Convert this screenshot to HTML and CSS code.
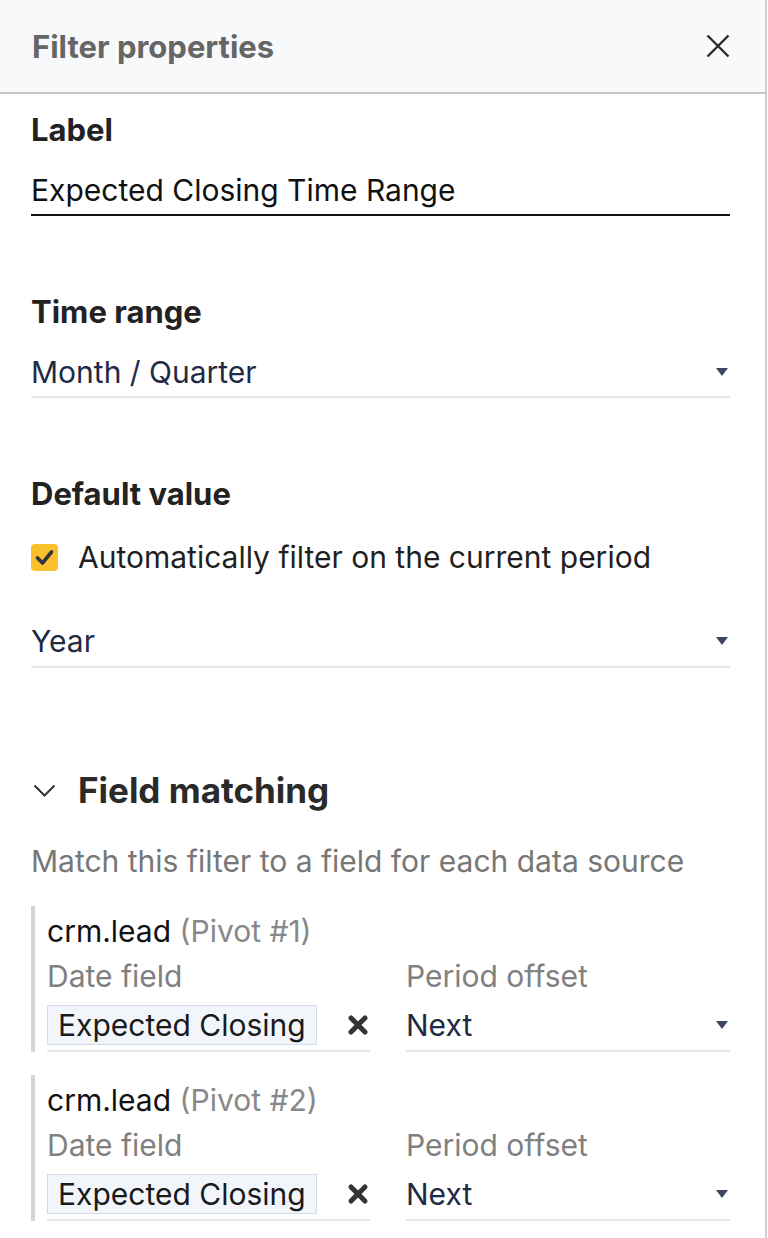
FILE: index.html
```html
<!DOCTYPE html>
<html>
<head>
<meta charset="utf-8">
<link rel="stylesheet" href="styles.css">
</head>
<body>
<div class="panel">
  <div class="header">
    <div class="title">Filter properties</div>
    <svg class="close" width="24" height="24" viewBox="0 0 24 24"><path d="M1.5 1.5 L22.5 22.5 M22.5 1.5 L1.5 22.5" stroke="#2b2b2b" stroke-width="2.4" fill="none"/></svg>
  </div>
  <div class="content">
    <div class="section s-label">
      <div class="heading">Label</div>
      <div class="input">Expected Closing Time Range</div>
    </div>
    <div class="section s-range">
      <div class="heading">Time range</div>
      <div class="select"><span>Month / Quarter</span><i class="caret"></i></div>
    </div>
    <div class="section s-default">
      <div class="heading">Default value</div>
      <div class="check-row">
        <span class="checkbox"><svg width="27" height="27" viewBox="0 0 27 27"><path d="M6.5 14 L11.5 19 L20.5 8" stroke="#2f3440" stroke-width="3.6" fill="none" stroke-linecap="round" stroke-linejoin="round"/></svg></span>
        <span>Automatically filter on the current period</span>
      </div>
      <div class="select year"><span>Year</span><i class="caret"></i></div>
    </div>
    <div class="section s-matching">
      <div class="fm-head">
        <svg class="chev" width="23" height="13" viewBox="0 0 23 13"><path d="M1.5 1.5 L11.5 11.5 L21.5 1.5" stroke="#333" stroke-width="2" fill="none"/></svg>
        <span>Field matching</span>
      </div>
      <div class="desc">Match this filter to a field for each data source</div>
      <div class="card">
        <div class="model">crm.lead <span class="muted">(Pivot #1)</span></div>
        <div class="grid">
          <div class="col-label">Date field</div>
          <div class="col-label">Period offset</div>
          <div class="field">
            <span class="tag">Expected Closing</span>
            <svg class="del" width="22" height="22" viewBox="0 0 22 22"><path d="M4 4 L18 18 M18 4 L4 18" stroke="#333" stroke-width="5" stroke-linecap="round" fill="none"/></svg>
          </div>
          <div class="select small"><span>Next</span><i class="caret"></i></div>
        </div>
      </div>
      <div class="card">
        <div class="model">crm.lead <span class="muted">(Pivot #2)</span></div>
        <div class="grid">
          <div class="col-label">Date field</div>
          <div class="col-label">Period offset</div>
          <div class="field">
            <span class="tag">Expected Closing</span>
            <svg class="del" width="22" height="22" viewBox="0 0 22 22"><path d="M4 4 L18 18 M18 4 L4 18" stroke="#333" stroke-width="5" stroke-linecap="round" fill="none"/></svg>
          </div>
          <div class="select small"><span>Next</span><i class="caret"></i></div>
        </div>
      </div>
    </div>
  </div>
</div>
</body>
</html>
```
FILE: styles.css
```css
html, body {
  margin: 0;
  padding: 0;
  background: #fff;
}
body {
  font-family: Inter, "Noto Sans", "Liberation Sans", sans-serif;
  font-size: 30px;
  color: #1f1f1f;
}
.panel {
  width: 765px;
  min-height: 1238px;
  border-right: 2px solid #cfcfcf;
  box-sizing: content-box;
}
.header {
  height: 92px;
  background: #f8f9fa;
  border-bottom: 2px solid #c6c6c6;
  display: flex;
  align-items: center;
  justify-content: space-between;
  padding: 0 35px 0 32px;
}
.title {
  font-weight: 700;
  font-size: 31px;
  color: #666;
}
.close {
  display: block;
}
.content {
  padding: 0 35px 0 31px;
}
.heading {
  font-weight: 700;
  font-size: 31px;
  color: #222;
  line-height: 40px;
}
.s-label {
  padding-top: 16px;
}
.input {
  margin-top: 20px;
  line-height: 40px;
  border-bottom: 2px solid #111;
  color: #111;
  padding-bottom: 4px;
}
.s-range {
  margin-top: 76px;
}
.select {
  display: flex;
  align-items: center;
  justify-content: space-between;
  color: #1f2a44;
  line-height: 40px;
  border-bottom: 2px solid #e6e6ec;
  margin-top: 20px;
  padding-bottom: 4px;
}
.caret {
  display: block;
  width: 0;
  height: 0;
  border-left: 6px solid transparent;
  border-right: 6px solid transparent;
  border-top: 8px solid #3b475e;
  margin-right: 2px;
}
.s-default {
  margin-top: 76px;
}
.check-row {
  display: flex;
  align-items: center;
  gap: 20px;
  margin-top: 23px;
  line-height: 40px;
}
.checkbox {
  width: 27px;
  height: 27px;
  border-radius: 4px;
  background: #fbc12d;
  display: block;
  flex: none;
}
.checkbox svg {
  display: block;
}
.year {
  margin-top: 44px;
  padding-bottom: 5px;
}
.s-matching {
  margin-top: 98px;
}
.fm-head {
  display: flex;
  align-items: center;
  gap: 22px;
  font-weight: 700;
  font-size: 35px;
  color: #2a2a2a;
  line-height: 48px;
}
.chev {
  display: block;
  margin-left: 2px;
}
.desc {
  color: #777;
  margin-top: 27px;
  line-height: 40px;
}
.card {
  border-left: 4px solid #d4d4d4;
  padding-left: 12px;
  margin-top: 25px;
}
.card + .card {
  margin-top: 23px;
}
.model {
  color: #111;
  line-height: 40px;
  padding-top: 5px;
}
.muted {
  color: #888;
}
.grid {
  display: grid;
  grid-template-columns: 323px 324px;
  column-gap: 36px;
}
.col-label {
  color: #808080;
  line-height: 40px;
  margin-top: 5px;
}
.field {
  display: flex;
  align-items: center;
  justify-content: space-between;
  border-bottom: 2px solid #e6e6ec;
  padding: 0 0 5px 0;
  margin-top: 9px;
}
.tag {
  background: #f2f6fa;
  border: 1px solid #d3dde8;
  padding: 0 10px;
  line-height: 38px;
  color: #1a1a1a;
}
.del {
  display: block;
  margin-right: 1px;
}
.small {
  margin-top: 9px;
  padding: 0 0 5px 0;
  line-height: 40px;
}
```
